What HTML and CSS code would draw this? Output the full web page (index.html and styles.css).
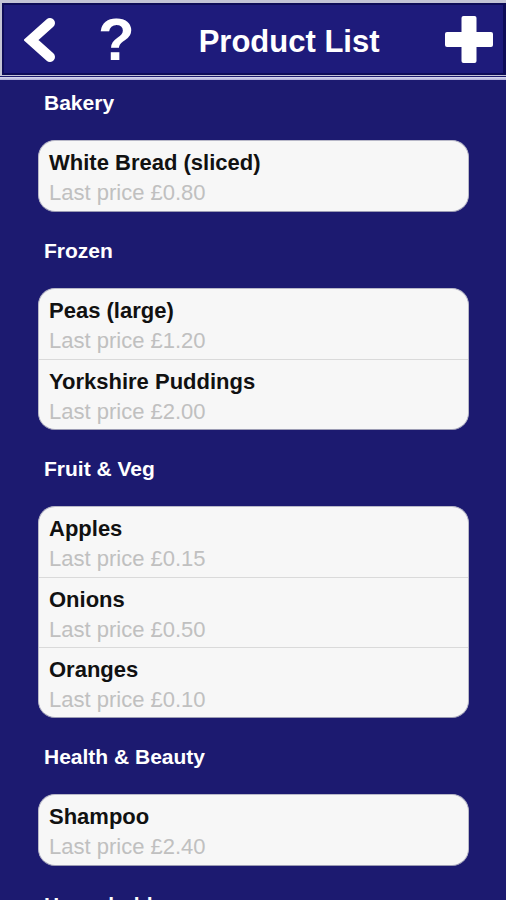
FILE: index.html
```html
<!DOCTYPE html>
<html lang="en">
<head>
    <meta charset="UTF-8">
    <meta name="viewport" content="width=device-width, initial-scale=1.0">
    <title>Product List</title>
    <link rel="stylesheet" href="styles.css">
</head>
<body>
    <div class="topbar">
        <div class="bar">
            <svg class="back" width="32" height="44" viewBox="0 0 32 44">
                <polyline points="26,5 7,22 26,39" fill="none" stroke="#fff" stroke-width="10" stroke-linejoin="miter" stroke-linecap="round"/>
            </svg>
            <span class="help">?</span>
            <h1>Product List</h1>
            <svg class="add" width="48" height="47" viewBox="0 0 48 47">
                <rect x="16.5" y="0" width="15" height="47" rx="2" fill="#fff"/>
                <rect x="0" y="16" width="48" height="15" rx="2" fill="#fff"/>
            </svg>
        </div>
        <div class="shine"></div>
    </div>

    <div class="list">
        <div class="section">
            <h2>Bakery</h2>
            <div class="card">
                <div class="row"><div class="name">White Bread (sliced)</div><div class="price">Last price £0.80</div></div>
            </div>
        </div>
        <div class="section">
            <h2>Frozen</h2>
            <div class="card">
                <div class="row"><div class="name">Peas (large)</div><div class="price">Last price £1.20</div></div>
                <div class="row"><div class="name">Yorkshire Puddings</div><div class="price">Last price £2.00</div></div>
            </div>
        </div>
        <div class="section">
            <h2>Fruit &amp; Veg</h2>
            <div class="card">
                <div class="row"><div class="name">Apples</div><div class="price">Last price £0.15</div></div>
                <div class="row"><div class="name">Onions</div><div class="price">Last price £0.50</div></div>
                <div class="row"><div class="name">Oranges</div><div class="price">Last price £0.10</div></div>
            </div>
        </div>
        <div class="section">
            <h2>Health &amp; Beauty</h2>
            <div class="card">
                <div class="row"><div class="name">Shampoo</div><div class="price">Last price £2.40</div></div>
            </div>
        </div>
        <div class="section">
            <h2>Household</h2>
            <div class="card">
                <div class="row"><div class="name">Washing Up Liquid</div><div class="price">Last price £1.00</div></div>
            </div>
        </div>
    </div>
</body>
</html>
```

FILE: styles.css
```css
body {
    margin: 0;
    background-color: #1c1a70;
    font-family: "Liberation Sans", Arial, sans-serif;
    overflow: hidden;
}
.topbar {
    background-color: #c4c4d6;
    padding: 3px 0 0 2px;
}
.bar {
    height: 68px;
    background-color: #1e1b7b;
    border: 2px solid #0e0c58;
    border-right-width: 3px;
    display: flex;
    align-items: center;
    color: #fff;
}
.shine {
    height: 3px;
    margin-top: 1px;
    margin-left: -2px;
    background: linear-gradient(#dcdcf0, #a9a9d4);
    border-top: 1px solid #1c1a70;
}
.back {
    margin-left: 20px;
    margin-top: 2px;
}
.help {
    margin-left: 42px;
    font-size: 60px;
    font-weight: bold;
    line-height: 60px;
    margin-top: 2px;
}
h1 {
    margin: 6px 0 0 64px;
    font-size: 31px;
    line-height: 40px;
    font-weight: bold;
}
.add {
    margin-left: auto;
    margin-right: 10px;
}
.list {
    padding: 0 37px 0 38px;
}
h2 {
    margin: 0;
    padding: 27px 0 25px 6px;
    font-size: 21px;
    line-height: 24px;
    color: #fff;
}
.section:first-child h2 {
    padding-top: 11px;
}
.card {
    background-color: #f7f7f7;
    border: 1px solid #b8b8c8;
    border-bottom-color: #9c9cb4;
    border-radius: 17px;
    overflow: hidden;
}
.row {
    height: 70px;
    box-sizing: border-box;
    padding: 7px 10px 3px;
}
.row + .row {
    border-top: 1px solid #dadada;
}
.name {
    font-size: 22px;
    font-weight: bold;
    line-height: 30px;
    color: #111;
}
.price {
    font-size: 22px;
    line-height: 30px;
    color: #c0c0c0;
}
```
